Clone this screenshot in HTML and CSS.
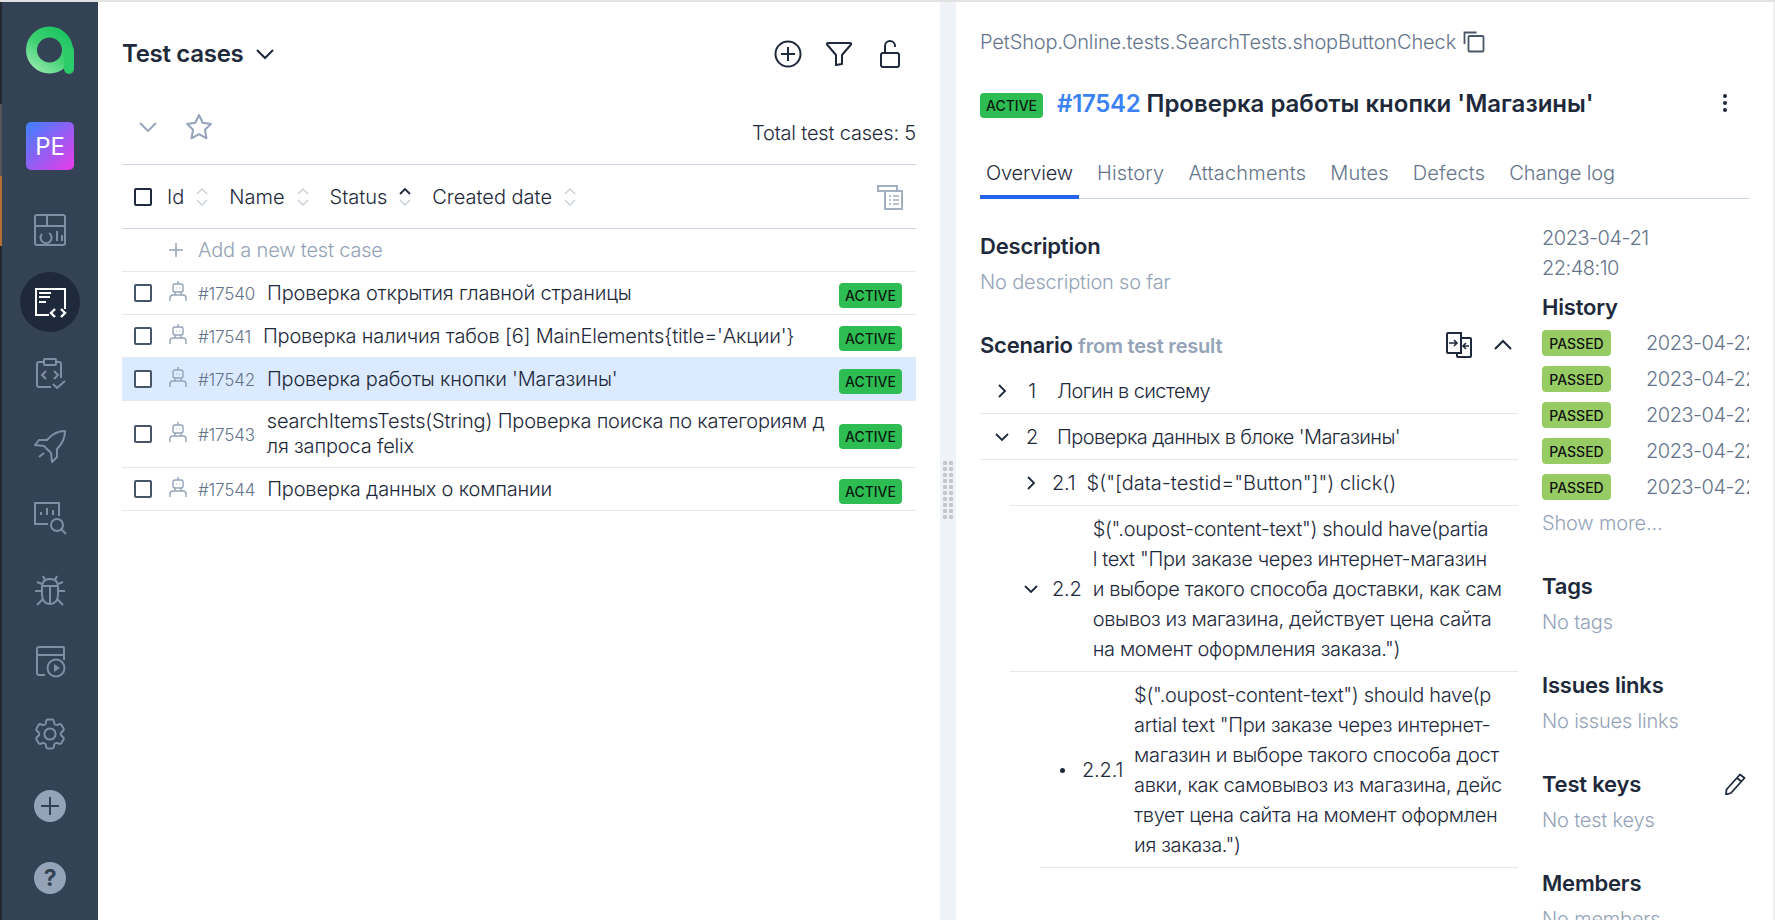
FILE: index.html
```html
<!doctype html>
<html lang="en">
<head>
  <meta charset="UTF-8">
  <title>Test cases</title>
  <link rel="stylesheet" href="styles.css">
</head>
<body>
  <svg class="defs">
    <symbol id="robot" viewBox="0 0 18 20">
      <g fill="none" stroke="currentColor" stroke-width="1.4">
        <path d="M9 0v3"/>
        <rect x="4" y="3" width="10" height="8" rx="2"/>
        <path d="M7 7h.5M10.5 7h.5"/>
        <path d="M6 11v3M12 11v3M1 20v-3a3 3 0 0 1 3-3h10a3 3 0 0 1 3 3v3"/>
      </g>
    </symbol>
    <symbol id="sort" viewBox="0 0 12 20">
      <path d="M1 7l5-5 5 5M1 13l5 5 5-5" fill="none" stroke="#c8ced6" stroke-width="1.4"/>
    </symbol>
    <symbol id="sort-up" viewBox="0 0 12 20">
      <path d="M1 7l5-5 5 5" fill="none" stroke="#1e293b" stroke-width="1.8"/>
      <path d="M1 13l5 5 5-5" fill="none" stroke="#c8ced6" stroke-width="1.4"/>
    </symbol>
    <symbol id="chev-right" viewBox="0 0 16 16">
      <path d="M5 2l6 6-6 6" fill="none" stroke="#1e293b" stroke-width="1.8"/>
    </symbol>
    <symbol id="chev-down" viewBox="0 0 16 16">
      <path d="M2 5l6 6 6-6" fill="none" stroke="#1e293b" stroke-width="1.8"/>
    </symbol>
  </svg>

  <div class="topline"></div>
  <div class="app">
    <div class="edge">
      <div class="edge-dark"></div>
      <div class="edge-grey"></div>
      <div class="edge-orange"></div>
      <div class="edge-dark edge-fill"></div>
    </div>

    <aside class="sidebar">
      <svg class="logo" viewBox="0 0 48 48">
        <defs>
          <linearGradient id="logo-grad" x1="0.1" y1="1" x2="0.8" y2="0">
            <stop offset="0" stop-color="#8be6a6"/>
            <stop offset="0.5" stop-color="#3fd173"/>
            <stop offset="1" stop-color="#1fc463"/>
          </linearGradient>
        </defs>
        <circle cx="23.5" cy="24" r="18" fill="none" stroke="url(#logo-grad)" stroke-width="11"/>
        <path d="M43 24v19" fill="none" stroke="#2bcb69" stroke-width="10" stroke-linecap="round"/>
      </svg>
      <div class="project">PE</div>
      <nav class="menu">
        <a class="menu-item" href="#">
          <svg class="icon-32" viewBox="0 0 32 32"><g fill="none" stroke="currentColor" stroke-width="2"><rect x="1" y="1" width="30" height="30" rx="2"/><path d="M1 12h30M13 1v11M15 19a5.500 5.500 0 1 1-7 1M23 17v10M28 21v6"/></g></svg>
        </a>
        <a class="menu-item active" href="#">
          <svg class="icon-32" viewBox="0 0 32 32"><g fill="none" stroke="currentColor" stroke-width="2"><path d="M15 29H2V3h29v20"/><path d="M5 7h12M5 11h11M5 16h7"/><path d="M21 23l-4 4 4 4M27 23l4 4-4 4" stroke-width="2.400"/></g></svg>
        </a>
        <a class="menu-item" href="#">
          <svg class="icon-32" viewBox="0 0 32 32"><g fill="none" stroke="currentColor" stroke-width="2"><path d="M17 29H5a2 2 0 0 1-2-2V6a2 2 0 0 1 2-2h5M22 4h3a2 2 0 0 1 2 2v14"/><rect x="10" y="1" width="12" height="6" rx="1"/><path d="M12 13l-4 4 4 4M20 13l4 4-4 4M19 26l4 4 8-7"/></g></svg>
        </a>
        <a class="menu-item" href="#">
          <svg class="icon-32" viewBox="0 0 32 32"><g fill="none" stroke="currentColor" stroke-width="2" stroke-linejoin="round"><path d="M31 1c-8 0-13 3-18 9H5l-4 5 9 1 7 7 1 9 5-5v-8c5-5 8-10 8-18z"/><path d="M10 23l-5 4"/></g></svg>
        </a>
        <a class="menu-item" href="#">
          <svg class="icon-32" viewBox="0 0 32 32"><g fill="none" stroke="currentColor" stroke-width="2"><path d="M14 22H1V1h24v13"/><path d="M7 13v-3M13 13V6M19 13v-5"/><circle cx="23" cy="23" r="6"/><path d="M27 27l5 5"/></g></svg>
        </a>
        <a class="menu-item" href="#">
          <svg class="icon-32" viewBox="0 0 32 32"><g fill="none" stroke="currentColor" stroke-width="2"><path d="M8 13c0-5 3-8 8-8s8 3 8 8v8c0 5-3 9-8 9s-8-4-8-9z"/><path d="M8 12h16M16 12v18M11 6L9 2M21 6l2-4M8 17H1M24 17h7M8 10L3 8M24 10l5-2M9 25l-6 6M23 25l6 6"/></g></svg>
        </a>
        <a class="menu-item" href="#">
          <svg class="icon-32" viewBox="0 0 32 32"><g fill="none" stroke="currentColor" stroke-width="2"><path d="M11 29H5a2 2 0 0 1-2-2V3a2 2 0 0 1 2-2h24a1 1 0 0 1 1 1v6a1 1 0 0 1-1 1H3M30 9v5"/><circle cx="22" cy="22" r="8.500"/></g><path d="M20 18l6 4-6 4z" fill="currentColor"/></svg>
        </a>
        <a class="menu-item" href="#">
          <svg class="icon-32" viewBox="2 2 20 20"><g fill="none" stroke="currentColor" stroke-width="1.250"><path d="M9.594 3.940c.090-.542.560-.940 1.110-.940h2.593c.550 0 1.020.398 1.110.940l.213 1.281c.063.374.313.686.645.870.074.040.147.083.220.127.325.196.720.257 1.075.124l1.217-.456a1.125 1.125 0 0 1 1.370.490l1.296 2.247a1.125 1.125 0 0 1-.260 1.431l-1.003.827c-.293.241-.438.613-.430.992a7.723 7.723 0 0 1 0 .255c-.008.378.137.750.430.991l1.004.827c.424.350.534.955.260 1.430l-1.298 2.247a1.125 1.125 0 0 1-1.369.491l-1.217-.456c-.355-.133-.750-.072-1.076.124a6.470 6.470 0 0 1-.220.128c-.331.183-.581.495-.644.869l-.213 1.281c-.090.543-.560.940-1.110.940h-2.594c-.550 0-1.019-.398-1.110-.940l-.213-1.281c-.062-.374-.312-.686-.644-.870a6.520 6.520 0 0 1-.220-.127c-.325-.196-.720-.257-1.076-.124l-1.217.456a1.125 1.125 0 0 1-1.369-.490l-1.297-2.247a1.125 1.125 0 0 1 .260-1.431l1.004-.827c.292-.240.437-.613.430-.991a6.932 6.932 0 0 1 0-.255c.007-.380-.138-.751-.430-.992l-1.004-.827a1.125 1.125 0 0 1-.260-1.430l1.297-2.247a1.125 1.125 0 0 1 1.370-.491l1.216.456c.356.133.751.072 1.076-.124.072-.044.146-.086.220-.128.332-.183.582-.495.644-.869l.214-1.280z"/><circle cx="12" cy="12" r="3.500"/></g></svg>
        </a>
        <a class="menu-item" href="#">
          <svg class="icon-32" viewBox="0 0 32 32"><circle cx="16" cy="16" r="16" fill="#94a3b8"/><path d="M16 7v18M7 16h18" stroke="#334155" stroke-width="2"/></svg>
        </a>
        <a class="menu-item" href="#"><span class="help">?</span></a>
      </nav>
    </aside>

    <main class="list-pane">
      <header class="list-head">
        <h1 class="list-title">Test cases</h1>
        <svg class="title-chev" viewBox="0 0 20 12"><path d="M2 2l8 8 8-8" fill="none" stroke="#1e293b" stroke-width="2"/></svg>
        <div class="head-actions">
          <svg class="head-icon" viewBox="0 0 28 28"><g fill="none" stroke="#1e293b" stroke-width="2"><circle cx="14" cy="14" r="12.500"/><path d="M14 7v14M7 14h14"/></g></svg>
          <svg class="head-icon" viewBox="0 0 28 28"><path d="M3 3h22a1 1 0 0 1 1 1.500L17 15v9l-6 1V15L2 4.500A1 1 0 0 1 3 3z" fill="none" stroke="#1e293b" stroke-width="2" stroke-linejoin="round"/></svg>
          <svg class="head-icon" viewBox="0 0 28 28"><g fill="none" stroke="#1e293b" stroke-width="2"><rect x="5" y="13" width="18" height="14" rx="2"/><path d="M9 13V6a5 5 0 0 1 10 0v1"/></g></svg>
        </div>
      </header>

      <div class="list-tools">
        <svg class="tool-chev" viewBox="0 0 20 12"><path d="M2 2l8 8 8-8" fill="none" stroke="#94a3b8" stroke-width="1.800"/></svg>
        <svg class="tool-star" viewBox="0 0 28 28"><path d="M14 2l3.700 7.800 8.300 1.100-6.100 5.900 1.600 8.500L14 21.100l-7.500 4.200 1.600-8.500L2 10.900l8.300-1.100z" fill="none" stroke="#94a3b8" stroke-width="2" stroke-linejoin="round"/></svg>
        <span class="total">Total test cases: 5</span>
      </div>

      <div class="table-head">
        <span class="check check-head"></span>
        <span class="th th-id">Id</span><svg class="sort"><use href="#sort"/></svg>
        <span class="th">Name</span><svg class="sort"><use href="#sort"/></svg>
        <span class="th">Status</span><svg class="sort"><use href="#sort-up"/></svg>
        <span class="th">Created date</span><svg class="sort"><use href="#sort"/></svg>
        <svg class="columns-icon" viewBox="0 0 26 26"><g fill="none" stroke="#a3b0c2" stroke-width="2"><path d="M7 7H1V2h19v4"/><rect x="8" y="7" width="17" height="18"/><path d="M12 12h2M12 16h2M12 20h2M16 12h6M16 16h6M16 20h6" stroke-width="1.500"/></g></svg>
      </div>

      <div class="add-row">
        <svg class="add-plus" viewBox="0 0 16 16"><path d="M8 1v14M1 8h14" stroke="#94a3b8" stroke-width="1.500"/></svg>
        <span>Add a new test case</span>
      </div>

      <div class="case">
        <span class="check"></span>
        <svg class="robot"><use href="#robot"/></svg>
        <span class="case-id">#17540</span>
        <span class="case-name">Проверка открытия главной страницы</span>
        <span class="badge">ACTIVE</span>
      </div>
      <div class="case">
        <span class="check"></span>
        <svg class="robot"><use href="#robot"/></svg>
        <span class="case-id">#17541</span>
        <span class="case-name">Проверка наличия табов [6] MainElements{title='Акции'}</span>
        <span class="badge">ACTIVE</span>
      </div>
      <div class="case selected">
        <span class="check"></span>
        <svg class="robot"><use href="#robot"/></svg>
        <span class="case-id">#17542</span>
        <span class="case-name">Проверка работы кнопки 'Магазины'</span>
        <span class="badge">ACTIVE</span>
      </div>
      <div class="case">
        <span class="check"></span>
        <svg class="robot"><use href="#robot"/></svg>
        <span class="case-id">#17543</span>
        <span class="case-name">searchItemsTests(String) Проверка поиска по категориям для запроса felix</span>
        <span class="badge">ACTIVE</span>
      </div>
      <div class="case">
        <span class="check"></span>
        <svg class="robot"><use href="#robot"/></svg>
        <span class="case-id">#17544</span>
        <span class="case-name">Проверка данных о компании</span>
        <span class="badge">ACTIVE</span>
      </div>
    </main>

    <div class="splitter"><div class="grip"></div></div>

    <section class="detail">
      <div class="crumb">
        <span>PetShop.Online.tests.SearchTests.shopButtonCheck</span>
        <svg class="copy" viewBox="0 0 22 22"><g fill="none" stroke="#475569" stroke-width="1.800"><rect x="5.500" y="5" width="15" height="15.500" rx="1"/><path d="M1.500 13V1.500h12"/></g></svg>
      </div>
      <div class="detail-title">
        <span class="badge">ACTIVE</span>
        <h2 class="title-text"><span class="title-id">#17542</span> Проверка работы кнопки 'Магазины'</h2>
        <svg class="more" viewBox="0 0 6 20"><g fill="#1e293b"><circle cx="3" cy="3" r="2"/><circle cx="3" cy="10" r="2"/><circle cx="3" cy="17" r="2"/></g></svg>
      </div>
      <div class="tabs">
        <a class="tab current" href="#">Overview</a>
        <a class="tab" href="#">History</a>
        <a class="tab" href="#">Attachments</a>
        <a class="tab" href="#">Mutes</a>
        <a class="tab" href="#">Defects</a>
        <a class="tab" href="#">Change log</a>
      </div>

      <div class="detail-body">
        <div class="detail-main">
          <h3 class="block-title">Description</h3>
          <p class="empty">No description so far</p>

          <div class="scenario-head">
            <h3 class="block-title">Scenario <span class="muted">from test result</span></h3>
            <svg class="compare" viewBox="0 0 26 26"><g fill="none" stroke="#1e293b" stroke-width="2"><path d="M2 1h13v20H2a1 1 0 0 1-1-1V2a1 1 0 0 1 1-1z"/><path d="M15 6h9a1 1 0 0 1 1 1v17a1 1 0 0 1-1 1H12a1 1 0 0 1-1-1v-3"/><path d="M3 11h8M8 8l3 3-3 3M23 14h-6M20 11l-3 3 3 3" stroke-width="1.600"/></g></svg>
            <svg class="collapse" viewBox="0 0 20 12"><path d="M2 10l8-8 8 8" fill="none" stroke="#1e293b" stroke-width="2"/></svg>
          </div>

          <div class="step">
            <svg class="chev"><use href="#chev-right"/></svg>
            <span class="step-num num-top">1</span>
            <span class="step-text step-short">Логин в систему</span>
          </div>
          <div class="step">
            <svg class="chev"><use href="#chev-down"/></svg>
            <span class="step-num num-top">2</span>
            <span class="step-text step-short">Проверка данных в блоке 'Магазины'</span>
          </div>
          <div class="step level-2">
            <svg class="chev"><use href="#chev-right"/></svg>
            <span class="step-num">2.1</span>
            <span class="step-text step-code">$("[data-testid="Button"]") click()</span>
          </div>
          <div class="step level-2">
            <svg class="chev"><use href="#chev-down"/></svg>
            <span class="step-num">2.2</span>
            <span class="step-text step-long">$(".oupost-content-text") should have(partia<br>l text "При заказе через интернет-магазин<br>и выборе такого способа доставки, как сам<br>овывоз из магазина, действует цена сайта<br>на момент оформления заказа.")</span>
          </div>
          <div class="step level-3">
            <span class="dot"></span>
            <span class="step-num">2.2.1</span>
            <span class="step-text step-long">$(".oupost-content-text") should have(p<br>artial text "При заказе через интернет-<br>магазин и выборе такого способа дост<br>авки, как самовывоз из магазина, дейс<br>твует цена сайта на момент оформлен<br>ия заказа.")</span>
          </div>
        </div>

        <aside class="detail-side">
          <div class="created">2023-04-21<br>22:48:10</div>
          <h3 class="block-title side-first">History</h3>
          <div class="history-row"><span class="passed">PASSED</span><span class="history-date">2023-04-22</span></div>
          <div class="history-row"><span class="passed">PASSED</span><span class="history-date">2023-04-22</span></div>
          <div class="history-row"><span class="passed">PASSED</span><span class="history-date">2023-04-22</span></div>
          <div class="history-row"><span class="passed">PASSED</span><span class="history-date">2023-04-22</span></div>
          <div class="history-row"><span class="passed">PASSED</span><span class="history-date">2023-04-22</span></div>
          <p class="empty show-more">Show more...</p>

          <h3 class="block-title side-block">Tags</h3>
          <p class="empty">No tags</p>
          <h3 class="block-title side-block">Issues links</h3>
          <p class="empty">No issues links</p>
          <div class="side-row side-block">
            <h3 class="block-title">Test keys</h3>
            <svg class="pencil" viewBox="0 0 22 22"><path d="M16 1.500l4.500 3.500L7 20l-5 1.500.5-5zM13 5l4.500 3.500" fill="none" stroke="#1e293b" stroke-width="1.800" stroke-linejoin="round"/></svg>
          </div>
          <p class="empty">No test keys</p>
          <h3 class="block-title side-block">Members</h3>
          <p class="empty">No members</p>
        </aside>
      </div>
    </section>
    <div class="scrollbar"></div>
  </div>
</body>
</html>
```

FILE: styles.css
```css
* {
  box-sizing: border-box;
}
html, body {
  height: 100%;
}
body {
  margin: 0;
  display: flex;
  flex-direction: column;
  overflow: hidden;
  background-color: #fff;
  color: #1e293b;
  font-family: Inter, "Noto Sans", sans-serif;
  font-size: 20px;
  font-weight: 300;
  letter-spacing: -0.18px;
}
h1, h2, h3, p {
  margin: 0;
}
a {
  color: inherit;
  text-decoration: none;
}
.defs {
  display: none;
}
.topline {
  height: 2px;
  flex-shrink: 0;
  background-color: #e2e2e2;
}
.app {
  flex: 1;
  display: flex;
  min-height: 0;
}

/* left edge */
.edge {
  width: 2px;
  display: flex;
  flex-direction: column;
}
.edge-dark {
  height: 102px;
  background-color: #23272e;
}
.edge-grey {
  height: 72px;
  background-color: #555;
}
.edge-orange {
  height: 70px;
  background-color: #b5702f;
}
.edge-fill {
  flex: 1;
}

/* sidebar */
.sidebar {
  width: 96px;
  display: flex;
  flex-direction: column;
  align-items: center;
  background-color: #344256;
  padding-top: 24px;
}
.logo {
  width: 48px;
  height: 48px;
}
.project {
  width: 48px;
  height: 48px;
  margin-top: 48px;
  display: flex;
  align-items: center;
  justify-content: center;
  border-radius: 5px;
  background: linear-gradient(135deg, #3c82ff, #e93ae8);
  color: #fff;
  font-size: 24px;
  font-weight: 400;
}
.menu {
  margin-top: 30px;
  display: flex;
  flex-direction: column;
  align-items: center;
}
.menu-item {
  width: 60px;
  height: 60px;
  margin-bottom: 12px;
  display: flex;
  align-items: center;
  justify-content: center;
  border-radius: 50%;
  color: #7f8ea3;
}
.menu-item.active {
  background-color: #1e293b;
  color: #fff;
}
.icon-32 {
  width: 32px;
  height: 32px;
  overflow: visible;
}
.help {
  width: 32px;
  height: 32px;
  display: flex;
  align-items: center;
  justify-content: center;
  border-radius: 50%;
  background-color: #94a3b8;
  color: #334155;
  font-size: 23px;
  font-weight: 700;
}

/* test case list */
.list-pane {
  width: 842px;
  padding: 0 24px;
}
.list-head {
  height: 102px;
  display: flex;
  align-items: center;
  padding-top: 2px;
}
.list-title {
  font-size: 24px;
  font-weight: 600;
  line-height: 32px;
  letter-spacing: -0.3px;
}
.title-chev {
  width: 20px;
  height: 12px;
  margin-left: 12px;
}
.head-actions {
  margin-left: auto;
  margin-right: 12px;
  display: flex;
  gap: 23px;
}
.head-icon {
  width: 28px;
  height: 28px;
}
.list-tools {
  height: 61px;
  display: flex;
  align-items: center;
  padding-left: 16px;
  border-bottom: 1px solid #cbd5e1;
}
.tool-chev {
  width: 20px;
  height: 12px;
  margin-bottom: 14px;
}
.tool-star {
  width: 28px;
  height: 28px;
  margin-left: 27px;
  margin-bottom: 14px;
}
.total {
  margin-left: auto;
  margin-bottom: 2px;
}
.table-head {
  height: 64px;
  display: flex;
  align-items: center;
  padding-left: 12px;
  border-bottom: 1px solid #cbd5e1;
}
.check {
  width: 18px;
  height: 18px;
  flex-shrink: 0;
  border: 2px solid #475569;
  border-radius: 2px;
  background-color: #fff;
}
.check-head {
  border-color: #1e293b;
}
.th {
  margin-left: 21px;
  letter-spacing: 0;
}
.th-id {
  margin-left: 15px;
}
.sort {
  width: 12px;
  height: 20px;
  margin-left: 12px;
}
.columns-icon {
  width: 26px;
  height: 26px;
  margin-left: auto;
  margin-right: 13px;
}
.add-row {
  height: 43px;
  display: flex;
  align-items: center;
  padding-left: 46px;
  border-bottom: 1px solid #e2e8f0;
  color: #94a3b8;
}
.add-plus {
  width: 16px;
  height: 16px;
  margin-right: 14px;
}
.case {
  min-height: 43px;
  display: flex;
  align-items: center;
  padding: 8px 14px 8px 12px;
  border-bottom: 1px solid #e2e8f0;
}
.case.selected {
  background-color: #dbeafe;
}
.robot {
  width: 18px;
  height: 20px;
  flex-shrink: 0;
  margin-left: 17px;
  margin-bottom: 5px;
  color: #94a3b8;
}
.case-id {
  margin-left: 11px;
  font-size: 17px;
  color: #64748b;
  flex-shrink: 0;
  padding-top: 2px;
}
.case-name {
  flex: 1;
  margin-left: 12px;
  margin-right: 12px;
  line-height: 25px;
  word-break: break-all;
}
.badge {
  height: 25px;
  margin: 2px 0 -2px;
  padding: 0 6px;
  display: inline-flex;
  align-items: center;
  flex-shrink: 0;
  border-radius: 4px;
  background-color: #2dbd52;
  color: #0b1a10;
  font-size: 14px;
  font-weight: 500;
  letter-spacing: 0;
}

/* splitter */
.splitter {
  width: 16px;
  display: flex;
  justify-content: center;
  align-items: center;
  background-color: #eff3f8;
}
.grip {
  width: 12px;
  height: 60px;
  margin-top: 58px;
  background-image: radial-gradient(circle, #c5c7ca 2px, transparent 2.400px);
  background-size: 6px 6px;
}
.scrollbar {
  width: 2px;
  background-color: #efefef;
}

/* detail */
.detail {
  flex: 1;
  min-width: 0;
  padding: 0 24px;
}
.crumb {
  height: 80px;
  display: flex;
  align-items: center;
  gap: 7px;
  color: #64748b;
  letter-spacing: -0.12px;
}
.copy {
  width: 22px;
  height: 22px;
}
.detail-title {
  height: 42px;
  display: flex;
  align-items: center;
  gap: 14px;
}
.title-text {
  font-size: 24px;
  font-weight: 600;
  letter-spacing: 0;
}
.title-id {
  color: #3b82f6;
  letter-spacing: -0.3px;
}
.more {
  width: 6px;
  height: 20px;
  margin-left: auto;
  margin-right: 21px;
}
.tabs {
  height: 75px;
  display: flex;
  align-items: flex-end;
  gap: 12px;
  border-bottom: 1px solid #cbd5e1;
}
.tab {
  height: 48px;
  padding: 0 6px;
  margin-bottom: -1px;
  display: flex;
  align-items: center;
  border-bottom: 4px solid transparent;
  color: #64748b;
  letter-spacing: 0.2px;
}
.tab:last-child {
  letter-spacing: -0.15px;
}
.tab.current {
  color: #1e293b;
  border-bottom-color: #2563eb;
  letter-spacing: -0.18px;
}
.detail-body {
  display: flex;
  gap: 24px;
}
.detail-main {
  width: 538px;
  flex-shrink: 0;
  padding-top: 32px;
}
.block-title {
  font-size: 22px;
  font-weight: 600;
  line-height: 30px;
  letter-spacing: -0.2px;
}
.muted {
  color: #94a3b8;
  font-size: 20px;
}
.empty {
  margin-top: 6px;
  color: #94a3b8;
  line-height: 30px;
}
.scenario-head {
  margin-top: 28px;
  margin-bottom: 3px;
  height: 40px;
  display: flex;
  align-items: center;
}
.compare {
  width: 26px;
  height: 26px;
  margin-left: auto;
}
.collapse {
  width: 20px;
  height: 12px;
  margin-left: 21px;
  margin-right: 5px;
}
.step {
  display: flex;
  align-items: center;
  min-height: 46px;
  padding: 8px 0 7px;
  border-bottom: 1px solid #e2e8f0;
  line-height: 30px;
}
.chev {
  width: 16px;
  height: 16px;
  flex-shrink: 0;
  margin-left: 14px;
}
.step-num {
  flex-shrink: 0;
  margin-left: 8px;
}
.num-top {
  width: 28px;
  text-align: center;
}
.step-text {
  margin-left: 11px;
  white-space: nowrap;
}
.step-short {
  letter-spacing: -0.6px;
}
.step-code {
  letter-spacing: 0;
}
.step-long {
  letter-spacing: -0.35px;
}
.level-2 {
  margin-left: 30px;
}
.level-2 .chev {
  margin-left: 13px;
}
.level-2 .step-num {
  margin-left: 13px;
}
.level-3 {
  margin-left: 60px;
  padding-left: 20px;
}
.dot {
  width: 5px;
  height: 5px;
  flex-shrink: 0;
  border-radius: 50%;
  background-color: #1e293b;
}
.level-3 .step-num {
  margin-left: 17px;
}

/* side column */
.detail-side {
  flex: 1;
  min-width: 0;
  overflow: hidden;
  padding-top: 24px;
}
.created {
  line-height: 30px;
  color: #64748b;
  letter-spacing: -0.5px;
}
.side-first {
  margin-top: 9px;
  margin-bottom: 3px;
}
.history-row {
  height: 36px;
  display: flex;
  align-items: center;
  white-space: nowrap;
}
.passed {
  width: 69px;
  height: 26px;
  display: flex;
  align-items: center;
  justify-content: center;
  flex-shrink: 0;
  border-radius: 4px;
  background-color: #97cc64;
  color: #111;
  font-size: 14px;
  font-weight: 500;
  letter-spacing: 0;
}
.history-date {
  margin-left: 35px;
  color: #64748b;
  letter-spacing: -0.5px;
}
.show-more {
  margin-top: 3px;
}
.side-block {
  margin-top: 33px;
}
.side-row {
  display: flex;
  justify-content: space-between;
  align-items: center;
}
.pencil {
  width: 22px;
  height: 22px;
  margin-right: 3px;
}
```
